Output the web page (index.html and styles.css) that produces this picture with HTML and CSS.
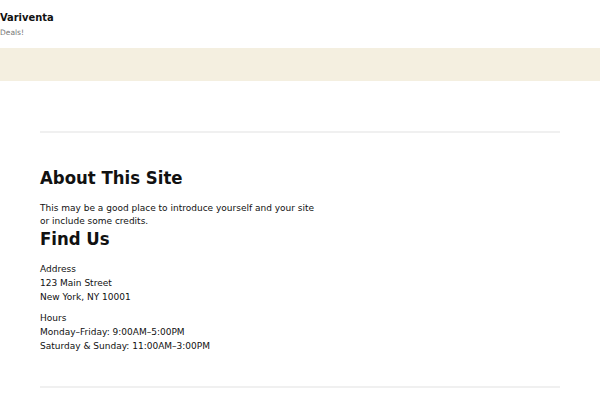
FILE: index.html
```html
<!DOCTYPE html>
<html>
<head>
<meta charset="utf-8">
<link rel="stylesheet" href="styles.css">
</head>
<body>
<header class="site-header">
  <div class="site-title">Variventa</div>
  <div class="site-desc">Deals!</div>
</header>
<div class="band"></div>
<main class="content">
  <hr class="rule">
  <section class="widgets">
    <div class="widget">
      <h2>About This Site</h2>
      <p>This may be a good place to introduce yourself and your site or include some credits.</p>
    </div>
    <div class="widget">
      <h2>Find Us</h2>
      <p>Address<br>123 Main Street<br>New York, NY 10001</p>
      <p>Hours<br>Monday–Friday: 9:00AM–5:00PM<br>Saturday &amp; Sunday: 11:00AM–3:00PM</p>
    </div>
  </section>
  <hr class="rule rule-bottom">
</main>
</body>
</html>
```
FILE: styles.css
```css
html, body { margin: 0; padding: 0; background: #fff; }
body { font-family: "DejaVu Sans", sans-serif; color: #111; }
.site-header { padding: 11px 0 0; height: 37px; box-sizing: border-box; }
.site-title { font-family: "DejaVu Sans Condensed", "DejaVu Sans", sans-serif; font-stretch: condensed; font-weight: bold; font-size: 11px; line-height: 13px; }
.site-desc { font-size: 7.5px; color: #777; line-height: 12px; margin-top: 3px; }
.band { height: 33px; background: #f4efe0; margin-top: 11px; }
.content { padding: 0 40px; }
.rule { border: 0; height: 2px; background: #f0f0f0; margin: 50px 0 0; }
.widgets { padding: 33px 0 26px; }
.widget { max-width: 276px; }
.widget + .widget { margin-top: -1px; }
.widget h2 { font-family: "DejaVu Sans Condensed", "DejaVu Sans", sans-serif; font-stretch: condensed; font-size: 18.4px; line-height: 24px; margin: 0 0 12px; }
.widget + .widget h2 { margin-bottom: 11px; }
.widget p { font-size: 9px; line-height: 14px; margin: 0 0 7px; }
.widget:first-child p { margin: 0; line-height: 13px; }
.rule-bottom { margin-top: 0; }
```
